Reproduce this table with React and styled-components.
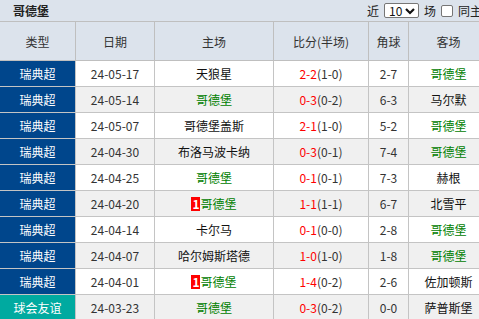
import React from "react";
import styled, { createGlobalStyle } from "styled-components";

const MATCHES = [
  { type: "瑞典超", date: "24-05-17", home: "天狼星", score: "2-2", half: "1-0", corner: "2-7", away: "哥德堡", awayUs: true },
  { type: "瑞典超", date: "24-05-14", home: "哥德堡", homeUs: true, score: "0-3", half: "0-2", corner: "6-3", away: "马尔默" },
  { type: "瑞典超", date: "24-05-07", home: "哥德堡盖斯", score: "2-1", half: "1-0", corner: "5-2", away: "哥德堡", awayUs: true },
  { type: "瑞典超", date: "24-04-30", home: "布洛马波卡纳", score: "0-3", half: "0-1", corner: "7-4", away: "哥德堡", awayUs: true },
  { type: "瑞典超", date: "24-04-25", home: "哥德堡", homeUs: true, score: "0-1", half: "0-1", corner: "7-3", away: "赫根" },
  { type: "瑞典超", date: "24-04-20", home: "哥德堡", homeUs: true, red: 1, score: "1-1", half: "1-1", corner: "6-7", away: "北雪平" },
  { type: "瑞典超", date: "24-04-14", home: "卡尔马", score: "0-1", half: "0-0", corner: "2-8", away: "哥德堡", awayUs: true },
  { type: "瑞典超", date: "24-04-07", home: "哈尔姆斯塔德", score: "1-0", half: "1-0", corner: "1-8", away: "哥德堡", awayUs: true },
  { type: "瑞典超", date: "24-04-01", home: "哥德堡", homeUs: true, red: 1, score: "1-4", half: "0-2", corner: "2-6", away: "佐加顿斯" },
  { type: "球会友谊", friendly: true, date: "24-03-23", home: "哥德堡", homeUs: true, score: "0-3", half: "0-2", corner: "0-0", away: "萨普斯堡" },
];

const COLS = "76px 79px 119px 95px 40px 80px";

export default function App() {
  return (
    <Page>
      <GlobalStyle />
      <TitleBar>
        <Title>哥德堡</Title>
        <Filter>
          <span>近</span>
          <FakeSelect>
            10
            <svg width="10" height="8" viewBox="0 0 10 8">
              <path d="M1 2 L5 6 L9 2" fill="none" stroke="#111" strokeWidth="2.2" />
            </svg>
          </FakeSelect>
          <span>场</span>
          <Check />
          <span>同主</span>
        </Filter>
      </TitleBar>
      <HeadRow>
        <HeadCell>类型</HeadCell>
        <HeadCell>日期</HeadCell>
        <HeadCell>主场</HeadCell>
        <HeadCell>比分(半场)</HeadCell>
        <HeadCell>角球</HeadCell>
        <HeadCell>客场</HeadCell>
      </HeadRow>
      {MATCHES.map((m, i) => (
        <Row key={m.date} $alt={i % 2 === 1}>
          <TypeCell $friendly={m.friendly}>{m.type}</TypeCell>
          <Cell>{m.date}</Cell>
          <Cell>
            {m.red ? <RedCard>{m.red}</RedCard> : null}
            <Team $us={m.homeUs}>{m.home}</Team>
          </Cell>
          <Cell>
            <Score>{m.score}</Score>({m.half})
          </Cell>
          <Cell>{m.corner}</Cell>
          <Cell>
            <Team $us={m.awayUs}>{m.away}</Team>
          </Cell>
        </Row>
      ))}
    </Page>
  );
}

const GlobalStyle = createGlobalStyle`
  html, body {
    margin: 0;
    padding: 0;
    background: #fff;
    overflow: hidden;
  }
  body {
    font-family: "Noto Sans CJK SC", "Liberation Sans", sans-serif;
    font-size: 12px;
    color: #333;
  }
`;

const Page = styled.div`
  width: 489px;
`;

const TitleBar = styled.div`
  height: 21px;
  display: flex;
  align-items: center;
  justify-content: space-between;
  background: #dce3ec;
  border-bottom: 1px solid #bfbfbf;
  padding-left: 13px;
  white-space: nowrap;
`;

const Title = styled.div`
  font-weight: bold;
  font-size: 12px;
  color: #222;
`;

const Filter = styled.div`
  display: flex;
  align-items: center;
  gap: 5px;
  margin-right: 7px;
  color: #222;
  font-size: 12px;
`;

const FakeSelect = styled.span`
  display: inline-flex;
  align-items: center;
  justify-content: space-between;
  box-sizing: border-box;
  width: 35px;
  height: 15px;
  padding: 0 3px 0 4px;
  border: 1px solid #767676;
  border-radius: 2px;
  background: #fff;
  font-size: 12px;
  color: #111;
  line-height: 1;
`;

const Check = styled.span`
  display: inline-block;
  box-sizing: border-box;
  width: 12px;
  height: 12px;
  border: 1px solid #767676;
  border-radius: 2px;
  background: #fff;
`;

const HeadRow = styled.div`
  display: grid;
  grid-template-columns: ${COLS};
  height: 39px;
  background: #dce3ec;
  border-bottom: 1px solid #bfbfbf;
  box-sizing: border-box;
`;

const HeadCell = styled.div`
  display: flex;
  align-items: center;
  justify-content: center;
  border-right: 1px solid #bfbfbf;
  color: #333;
  font-size: 12px;
`;

const Row = styled.div`
  display: grid;
  grid-template-columns: ${COLS};
  height: 26px;
  box-sizing: border-box;
  border-bottom: 1px solid #c4c4c4;
  background: ${(p) => (p.$alt ? "#f0f0f0" : "#fff")};
`;

const Cell = styled.div`
  display: flex;
  align-items: center;
  justify-content: center;
  border-right: 1px solid #c4c4c4;
  white-space: nowrap;
  color: #333;
`;

const TypeCell = styled(Cell)`
  background: ${(p) => (p.$friendly ? "#00aaa0" : "#00468c")};
  color: #fff;
`;

const Team = styled.span`
  color: ${(p) => (p.$us ? "#008000" : "#111")};
`;

const Score = styled.span`
  color: #f00;
`;

const RedCard = styled.span`
  display: inline-flex;
  align-items: center;
  justify-content: center;
  width: 9px;
  height: 14px;
  background: #f00;
  color: #fff;
  font-weight: bold;
  font-size: 12px;
  line-height: 1;
`;
